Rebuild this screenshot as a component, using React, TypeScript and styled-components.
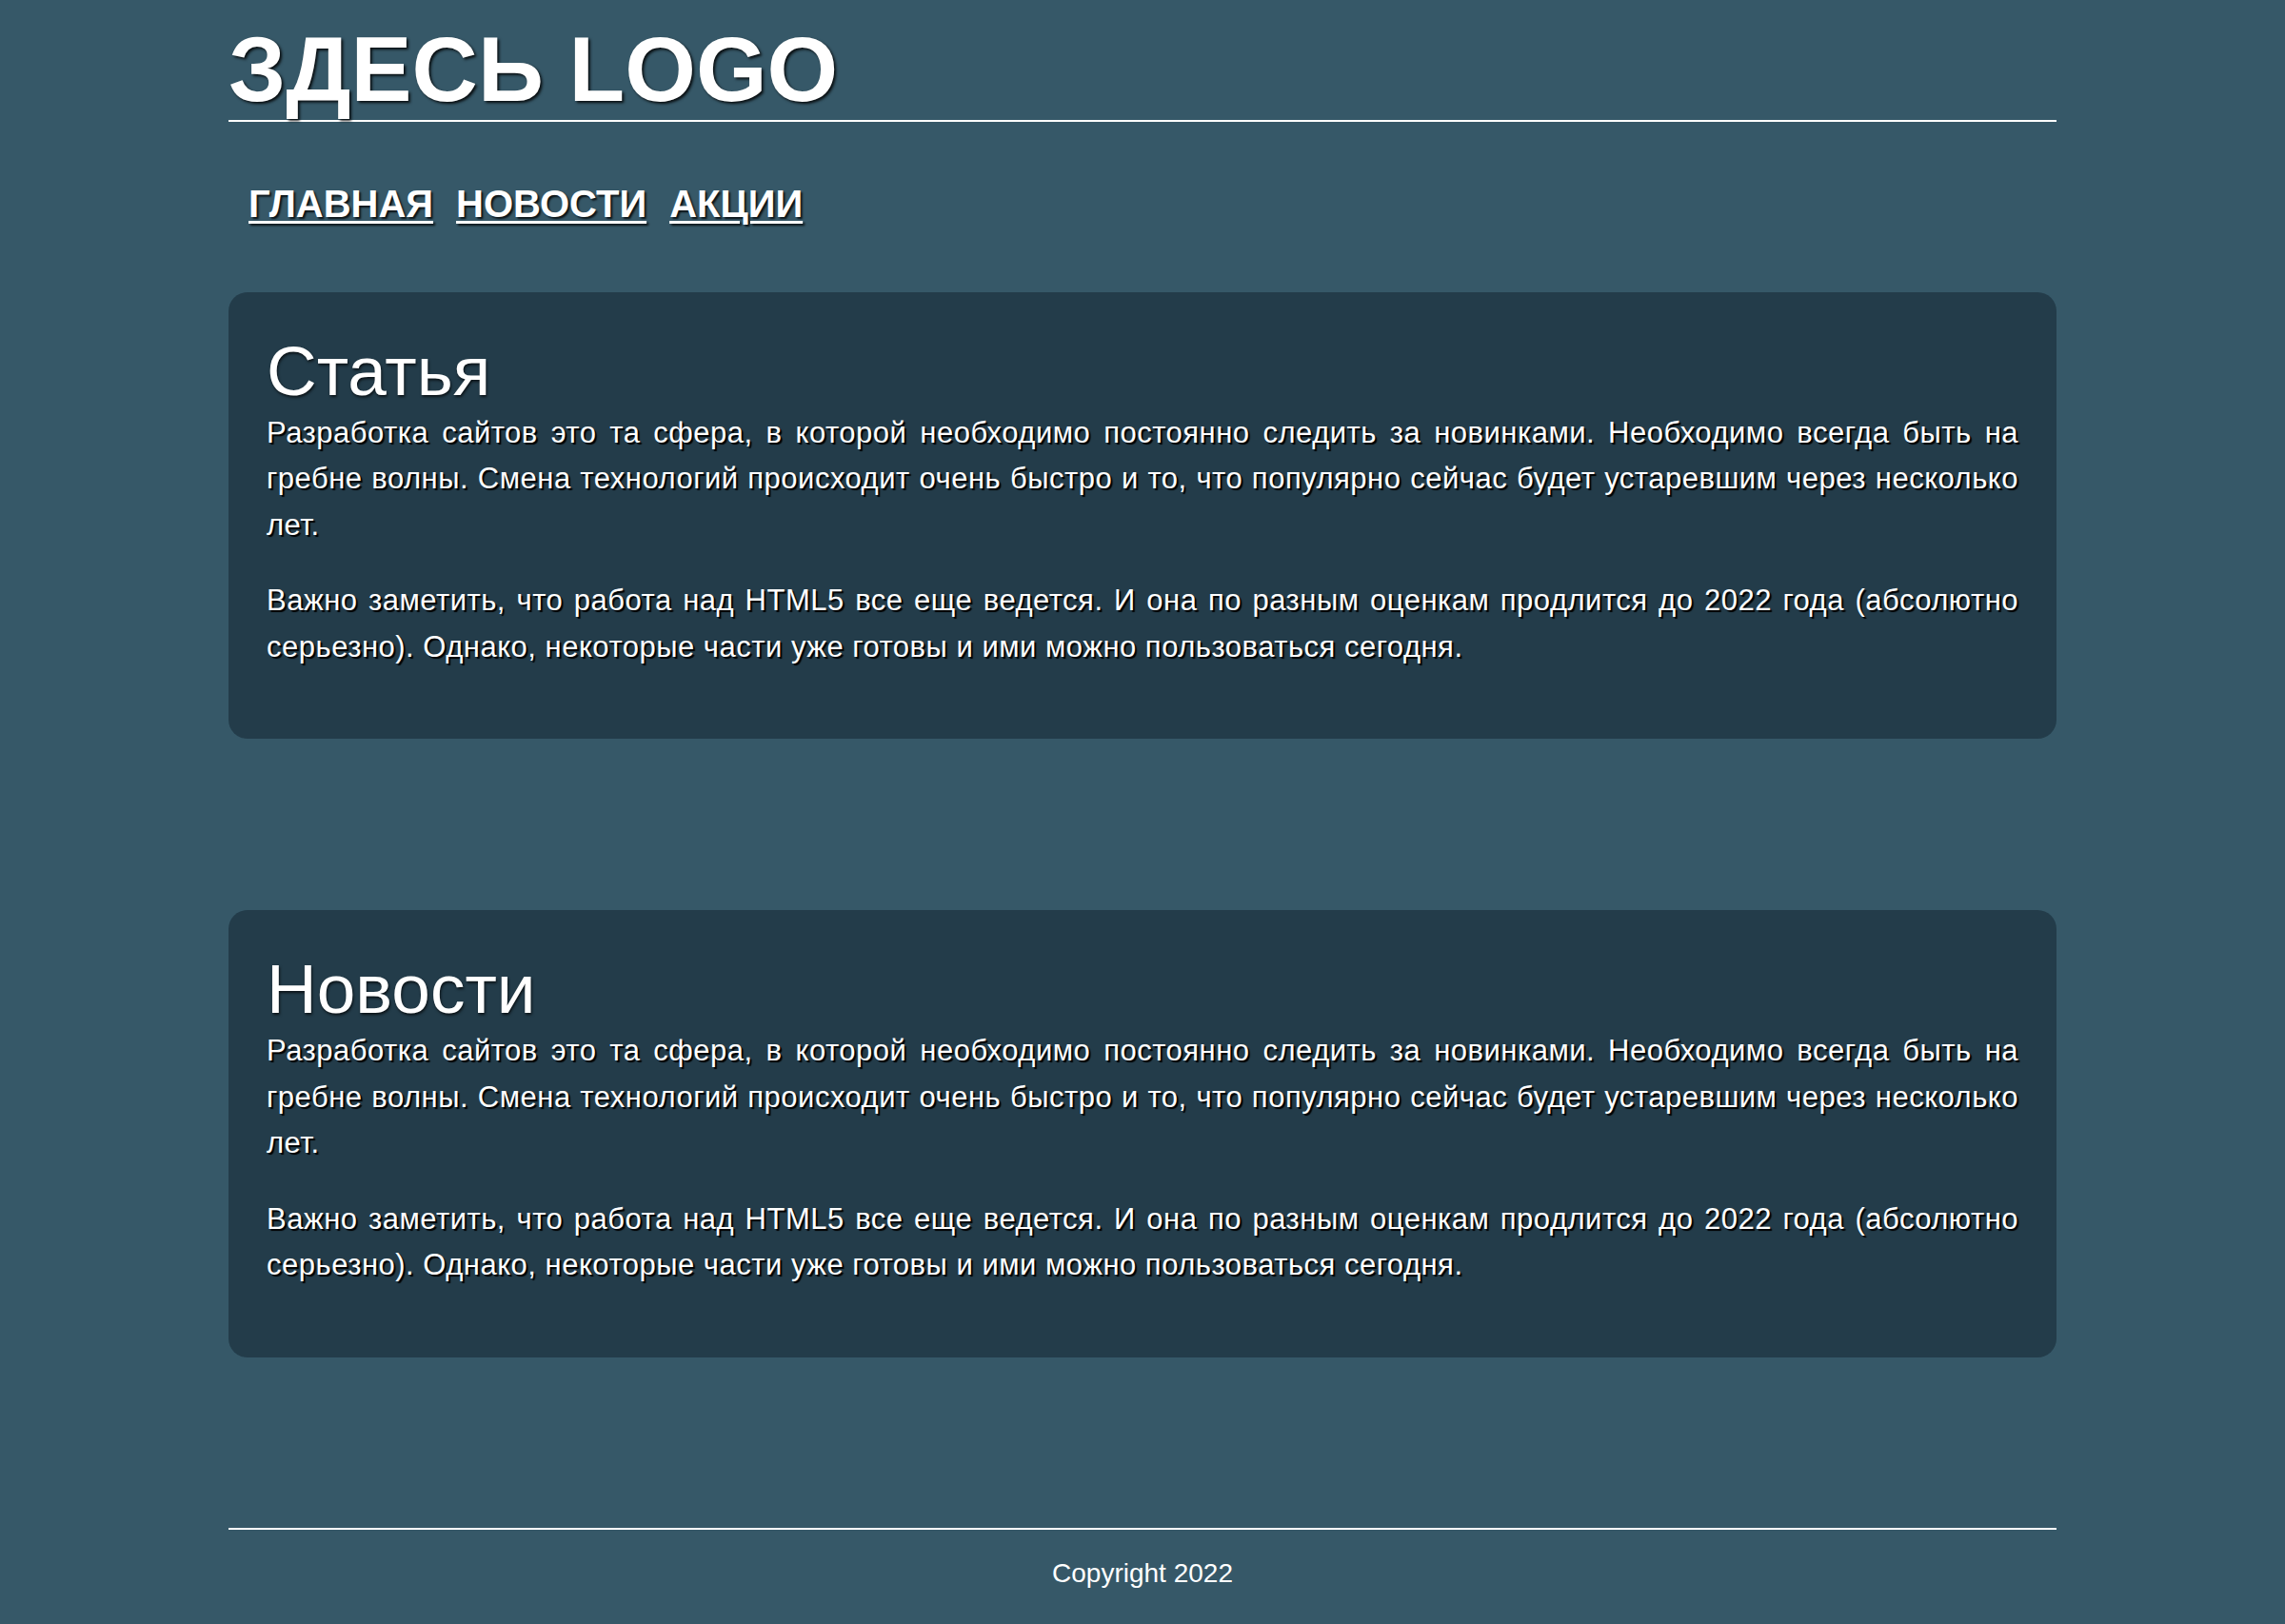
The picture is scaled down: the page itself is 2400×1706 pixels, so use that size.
import React from "react";
import styled, { createGlobalStyle } from "styled-components";

const GlobalStyle = createGlobalStyle`
  html, body {
    margin: 0;
    padding: 0;
    background: #365868;
  }
  body {
    font-family: "Liberation Sans", Arial, sans-serif;
    color: #ffffff;
  }
`;

const Page = styled.div`
  width: 80%;
  margin: 0 auto;
  padding-bottom: 40px;
`;

const Header = styled.header`
  padding-top: 20px;
  border-bottom: 2px solid #ffffff;
`;

const Logo = styled.h1`
  margin: 0;
  font-size: 96px;
  line-height: 1.1;
  font-weight: 700;
  color: #ffffff;
  text-shadow: 2px 2px 3px rgba(0, 0, 0, 0.85);
`;

const Nav = styled.nav`
  display: flex;
  gap: 24px;
  padding: 64px 0 0 21px;
`;

const NavLink = styled.a`
  font-size: 40px;
  font-weight: 700;
  color: #ffffff;
  text-decoration: underline;
  text-decoration-thickness: 3px;
  text-underline-offset: 4px;
  text-shadow: 2px 2px 2px rgba(0, 0, 0, 0.8);
`;

const Main = styled.main`
  display: flex;
  flex-direction: column;
  gap: 180px;
  padding-top: 70px;
`;

const Card = styled.section`
  background: #233c4a;
  border-radius: 20px;
  padding: 41px 40px 41px;
`;

const CardTitle = styled.h2`
  margin: 0;
  font-size: 73px;
  font-weight: 400;
  line-height: normal;
  text-shadow: 1px 2px 3px rgba(0, 0, 0, 0.7);
`;

const Paragraph = styled.p`
  margin: 0 0 31px;
  font-size: 31px;
  letter-spacing: 0.5px;
  line-height: 48.5px;
  text-align: justify;
  text-shadow: 2px 2px 1px #000000;
`;

const Footer = styled.footer`
  margin-top: 179px;
  border-top: 2px solid #ffffff;
  padding-top: 30px;
  text-align: center;
  font-size: 28px;
`;

const p1 =
  "Разработка сайтов это та сфера, в которой необходимо постоянно следить за новинками. Необходимо всегда быть на гребне волны. Смена технологий происходит очень быстро и то, что популярно сейчас будет устаревшим через несколько лет.";
const p2 =
  "Важно заметить, что работа над HTML5 все еще ведется. И она по разным оценкам продлится до 2022 года (абсолютно серьезно). Однако, некоторые части уже готовы и ими можно пользоваться сегодня.";

const sections = ["Статья", "Новости"];
const links = ["ГЛАВНАЯ", "НОВОСТИ", "АКЦИИ"];

export default function App() {
  return (
    <>
      <GlobalStyle />
      <Page>
        <Header>
          <Logo>ЗДЕСЬ LOGO</Logo>
        </Header>
        <Nav>
          {links.map((l) => (
            <NavLink key={l} href="#">
              {l}
            </NavLink>
          ))}
        </Nav>
        <Main>
          {sections.map((s) => (
            <Card key={s}>
              <CardTitle>{s}</CardTitle>
              <Paragraph>{p1}</Paragraph>
              <Paragraph>{p2}</Paragraph>
            </Card>
          ))}
        </Main>
        <Footer>Copyright 2022</Footer>
      </Page>
    </>
  );
}
